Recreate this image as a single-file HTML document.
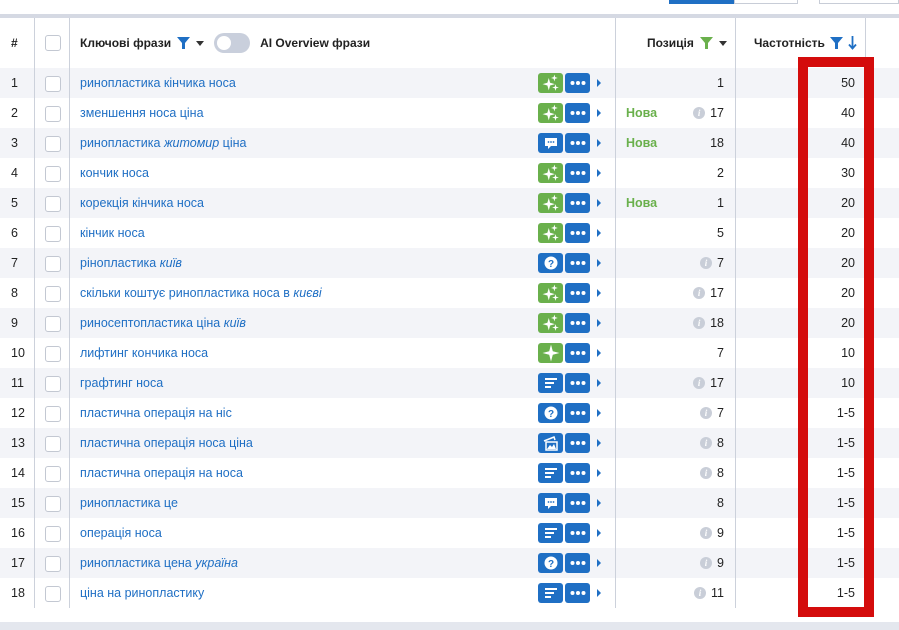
<!DOCTYPE html>
<html><head><meta charset="utf-8"><style>
*{margin:0;padding:0;box-sizing:border-box}
body{width:899px;height:630px;background:#fff;position:relative;overflow:hidden;font-family:"Liberation Sans",Arial,sans-serif;font-size:12.5px;color:#222}
.a{position:absolute}
.band{left:0;top:14px;width:899px;height:4px;background:#d5d9e3}
.bot{left:0;top:622px;width:899px;height:8px;background:#e4e7ee}
.vl{position:absolute;top:18px;width:1px;height:590px;background:#ccd1db}
.r{position:absolute;left:0;width:899px;height:30px}
.r.o{background:#f3f4f8}
.r>*{position:absolute;top:0;line-height:30px}
.n{left:11px}
.cb{left:45px;top:8px!important;width:16px;height:16px;border:1px solid #c3c8d2;border-radius:3px;background:#fff}
.hcb{position:absolute;left:45px;top:35px;width:16px;height:16px;border:1px solid #c3c8d2;border-radius:3px;background:#fff}
.k{left:80px;color:#1f6fc4}
.k i{font-style:italic}
.ic{top:5px!important;width:25px;height:20px;border-radius:3px;display:flex;align-items:center;justify-content:center}
.g{background:#6ab04c}.b{background:#1f6fc4}
.i1{left:538px}.i2{left:565px}
.tri{left:597px;top:11px!important;width:0;height:0;border-left:4px solid #1f6fc4;border-top:4px solid transparent;border-bottom:4px solid transparent}
.nv{left:626px;color:#6ab04c;font-weight:bold}
.p{right:175px;display:flex;align-items:center;gap:5px}
.inf{width:12px;height:12px;border-radius:50%;background:#c9ced8;color:#fff;font-size:9px;line-height:12px;text-align:center;font-weight:bold;font-style:italic;font-family:"Liberation Serif",serif}
.f{right:44px}
.hd{position:absolute;top:18px;height:50px;line-height:50px;font-weight:bold;font-size:12px;color:#222}
.red{left:798px;top:57px;width:76px;height:560px;border:10px solid #d40c0c}
</style></head><body>
<div class="a" style="left:669px;top:0;width:65px;height:4px;background:#1f6fc4"></div>
<div class="a" style="left:734px;top:0;width:64px;height:4px;border:1px solid #c8cdd7;border-top:0"></div>
<div class="a" style="left:819px;top:0;width:80px;height:4px;border:1px solid #c8cdd7;border-top:0"></div>
<div class="a band"></div>
<div class="hd" style="left:11px">#</div>
<div class="hcb"></div>
<div class="hd" style="left:80px;display:flex;align-items:center;gap:6px">Ключові фрази
<svg width="13" height="12" viewBox="0 0 13 12"><path d="M0 0H13L8 6V12H5V6Z" fill="#1f6fc4"/></svg>
<svg width="8" height="5"><path d="M0 0H8L4 5Z" fill="#333"/></svg>
<span style="display:inline-block;width:36px;height:20px;border-radius:10px;background:#c9cfdc;position:relative;margin-left:4px"><span style="position:absolute;left:3px;top:3px;width:14px;height:14px;border-radius:50%;background:#fff"></span></span>
<span style="margin-left:4px">AI Overview фрази</span></div>
<div class="hd" style="left:647px;display:flex;align-items:center;gap:6px">Позиція
<svg width="13" height="12" viewBox="0 0 13 12"><path d="M0 0H13L8 6V12H5V6Z" fill="#6ab04c"/></svg>
<svg width="8" height="5"><path d="M0 0H8L4 5Z" fill="#333"/></svg></div>
<div class="hd" style="left:754px;display:flex;align-items:center;gap:5px">Частотність
<svg width="13" height="12" viewBox="0 0 13 12"><path d="M0 0H13L8 6V12H5V6Z" fill="#1f6fc4"/></svg>
<svg width="9" height="14" viewBox="0 0 9 14"><path d="M4.5 0V12M1 8.5L4.5 12.5L8 8.5" stroke="#1f6fc4" stroke-width="1.8" fill="none"/></svg></div>

<div id="rows"></div>
<script>
var S='<svg width="20" height="18" viewBox="0 0 16 16" fill="#fff"><path d="M6 3.5L7.2 7.8L11.5 9L7.2 10.2L6 14.5L4.8 10.2L0.5 9L4.8 7.8Z"/><path d="M11 0.5L11.7 2.8L14 3.5L11.7 4.2L11 6.5L10.3 4.2L8 3.5L10.3 2.8Z"/><path d="M12 9L12.7 11.3L15 12L12.7 12.7L12 15L11.3 12.7L9 12L11.3 11.3Z"/></svg>';
var S1='<svg width="18" height="18" viewBox="0 0 16 16" fill="#fff"><path d="M8 0.5L9.6 6.4L15.5 8L9.6 9.6L8 15.5L6.4 9.6L0.5 8L6.4 6.4Z"/></svg>';
var C='<svg width="14" height="13" viewBox="0 0 14 13"><path d="M1 1H13V9H7L4 12V9H1Z" fill="#fff"/><circle cx="4.5" cy="5" r="0.9" fill="#1f6fc4"/><circle cx="7" cy="5" r="0.9" fill="#1f6fc4"/><circle cx="9.5" cy="5" r="0.9" fill="#1f6fc4"/></svg>';
var Q='<svg width="14" height="14" viewBox="0 0 14 14"><circle cx="7" cy="7" r="6.5" fill="#fff"/><text x="7" y="11" text-anchor="middle" font-size="10" font-weight="bold" fill="#1f6fc4" font-family="Liberation Sans">?</text></svg>';
var L='<svg width="14" height="12" viewBox="0 0 14 12" fill="#fff"><rect x="1" y="1" width="12" height="2"/><rect x="1" y="5" width="9" height="2"/><rect x="1" y="9" width="6" height="2"/></svg>';
var I='<svg width="16" height="15" viewBox="0 0 16 15"><path d="M1 5L11 1L12 4" stroke="#fff" stroke-width="1.5" fill="none"/><rect x="3" y="6" width="11" height="8" fill="none" stroke="#fff" stroke-width="1.5"/><path d="M4 13L7 9L9 11L11 8L13 13Z" fill="#fff"/></svg>';
var D='<svg width="16" height="4"><circle cx="2.5" cy="2" r="2" fill="#fff"/><circle cx="8" cy="2" r="2" fill="#fff"/><circle cx="13.5" cy="2" r="2" fill="#fff"/></svg>';
var data=[
["ринопластика кінчика носа","s",0,0,"1","50"],
["зменшення носа ціна","s",1,1,"17","40"],
["ринопластика <i>житомир</i> ціна","c",1,0,"18","40"],
["кончик носа","s",0,0,"2","30"],
["корекція кінчика носа","s",1,0,"1","20"],
["кінчик носа","s",0,0,"5","20"],
["рінопластика <i>київ</i>","q",0,1,"7","20"],
["скільки коштує ринопластика носа в <i>києві</i>","s",0,1,"17","20"],
["риносептопластика ціна <i>київ</i>","s",0,1,"18","20"],
["лифтинг кончика носа","S",0,0,"7","10"],
["графтинг носа","l",0,1,"17","10"],
["пластична операція на ніс","q",0,1,"7","1-5"],
["пластична операція носа ціна","i",0,1,"8","1-5"],
["пластична операція на носа","l",0,1,"8","1-5"],
["ринопластика це","c",0,0,"8","1-5"],
["операція носа","l",0,1,"9","1-5"],
["ринопластика цена <i>україна</i>","q",0,1,"9","1-5"],
["ціна на ринопластику","l",0,1,"11","1-5"]];
var m={s:['g',S],S:['g',S1],c:['b',C],q:['b',Q],l:['b',L],i:['b',I]};
var h='';
data.forEach(function(d,j){var t=m[d[1]];
h+='<div class="r'+(j%2==0?' o':'')+'" style="top:'+(68+30*j)+'px"><span class="n">'+(j+1)+'</span><span class="cb"></span><span class="k">'+d[0]+'</span><span class="ic i1 '+t[0]+'">'+t[1]+'</span><span class="ic i2 b">'+D+'</span><span class="tri"></span>'+(d[2]?'<span class="nv">Нова</span>':'')+'<span class="p">'+(d[3]?'<span class="inf">i</span>':'')+'<span>'+d[4]+'</span></span><span class="f">'+d[5]+'</span></div>';});
document.getElementById('rows').innerHTML=h;
</script>
<div class="vl" style="left:34px"></div>
<div class="vl" style="left:69px"></div>
<div class="vl" style="left:615px"></div>
<div class="vl" style="left:735px"></div>
<div class="vl" style="left:865px;height:40px"></div>
<div class="a red"></div>
<div class="a bot"></div>
</body></html>
